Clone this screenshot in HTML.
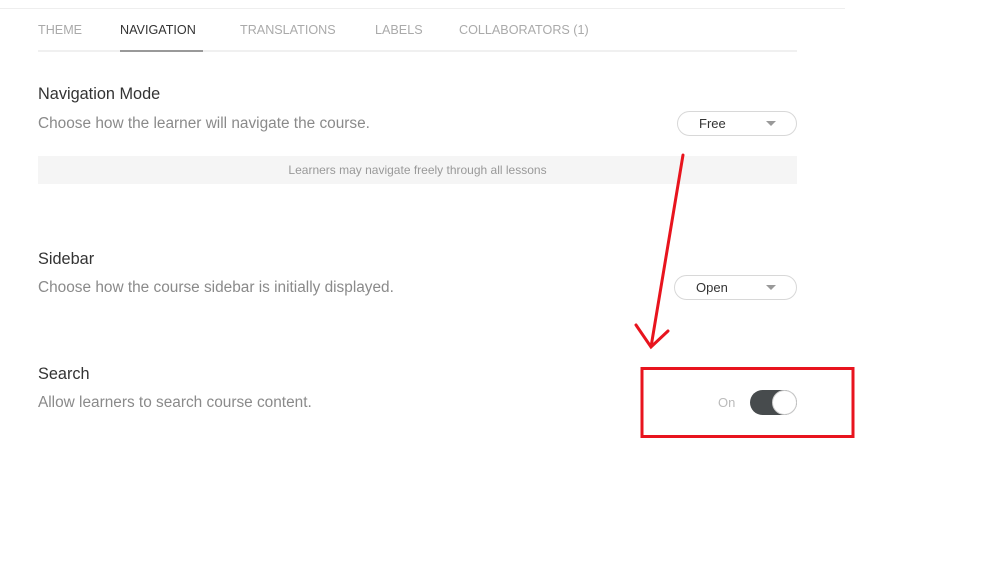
<!DOCTYPE html>
<html><head><style>
body{margin:0;width:998px;height:576px;background:#fff;font-family:"Liberation Sans",sans-serif;position:relative;overflow:hidden}
.a{position:absolute;white-space:nowrap}
.tab{top:23px;font-size:12.6px;color:#aaa}
.t{font-size:16.3px;color:#333}
.d{font-size:15.4px;color:#8a8a8a}
.dd{position:absolute;height:23px;border:1px solid #d8d8d8;border-radius:13px;font-size:13px;color:#333;line-height:23px}
.dd i{position:absolute;right:20px;top:9px;border-left:5px solid transparent;border-right:5px solid transparent;border-top:5px solid #999}
</style></head><body>
<div class="a" style="left:0;top:8px;width:845px;height:1px;background:#eee"></div>
<div class="a tab" style="left:38px">THEME</div>
<div class="a tab" style="left:120px;color:#333">NAVIGATION</div>
<div class="a tab" style="left:240px">TRANSLATIONS</div>
<div class="a tab" style="left:375px">LABELS</div>
<div class="a tab" style="left:459px">COLLABORATORS (1)</div>
<div class="a" style="left:38px;top:50px;width:759px;height:2px;background:#f0f0f0"></div>
<div class="a" style="left:120px;top:50px;width:83px;height:2px;background:#999"></div>

<div class="a t" style="left:38px;top:85px">Navigation Mode</div>
<div class="a d" style="left:38px;top:115px">Choose how the learner will navigate the course.</div>
<div class="dd" style="left:677px;top:111px;width:118px"><span style="position:absolute;left:21px">Free</span><i></i></div>
<div class="a" style="left:38px;top:156px;width:759px;height:28px;background:#f5f5f5;font-size:12px;color:#999;text-align:center;line-height:28px">Learners may navigate freely through all lessons</div>

<div class="a t" style="left:38px;top:250px">Sidebar</div>
<div class="a d" style="left:38px;top:279px">Choose how the course sidebar is initially displayed.</div>
<div class="dd" style="left:674px;top:275px;width:121px"><span style="position:absolute;left:21px">Open</span><i></i></div>

<div class="a t" style="left:38px;top:365px">Search</div>
<div class="a d" style="left:38px;top:394px">Allow learners to search course content.</div>
<div class="a" style="left:718px;top:395px;font-size:13px;color:#bbb">On</div>
<div class="a" style="left:750px;top:390px;width:47px;height:25px;border-radius:13px;background:#474b4d"></div>
<div class="a" style="left:772px;top:390px;width:23px;height:23px;border-radius:50%;background:#fff;border:1px solid #ccc"></div>

<svg class="a" style="left:0;top:0" width="998" height="576">
<g stroke="#e8141e" stroke-width="3" fill="none" stroke-linecap="round">
<path d="M683 155 L651 347 M636 325 L651 347 L668 331"/>
<rect x="642" y="368.5" width="211" height="68"/>
</g></svg>
</body></html>
